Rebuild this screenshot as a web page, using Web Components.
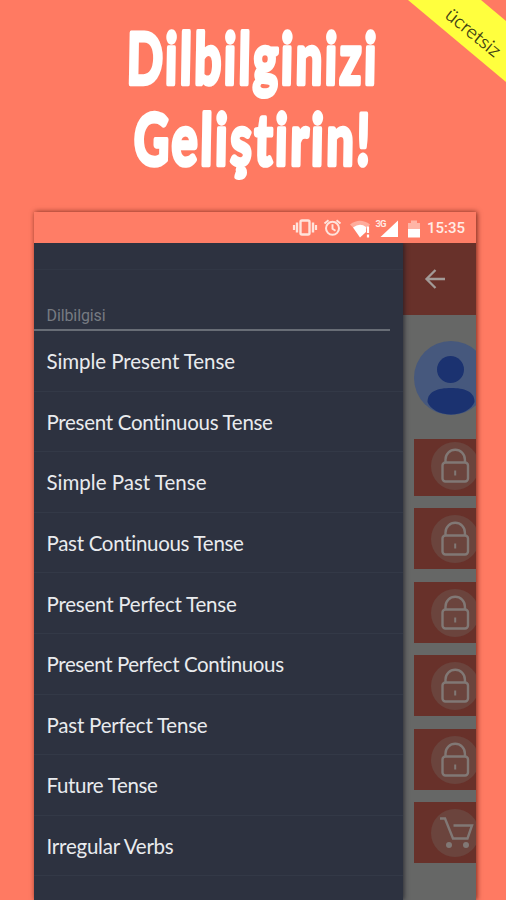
<!DOCTYPE html>
<html lang="tr">
<head>
<meta charset="UTF-8">
<title>Dilbilgisi</title>
<style>
    body {
        margin: 0;
        background: #ff7a62;
        font-family: Lato, "Open Sans", sans-serif;
    }
</style>
</head>
<body>
<promo-page>
    <promo-title slot="title"></promo-title>
    <corner-ribbon slot="ribbon"></corner-ribbon>
    <phone-frame>
        <status-bar slot="status">15:35</status-bar>
        <nav-drawer slot="drawer" heading="Dilbilgisi">
            <drawer-item width="188.5">Simple Present Tense</drawer-item>
            <drawer-item width="226.5">Present Continuous Tense</drawer-item>
            <drawer-item width="160">Simple Past Tense</drawer-item>
            <drawer-item width="197.5">Past Continuous Tense</drawer-item>
            <drawer-item width="190">Present Perfect Tense</drawer-item>
            <drawer-item width="237.5">Present Perfect Continuous</drawer-item>
            <drawer-item width="161">Past Perfect Tense</drawer-item>
            <drawer-item width="111">Future Tense</drawer-item>
            <drawer-item width="127">Irregular Verbs</drawer-item>
        </nav-drawer>
        <dimmed-page slot="page">
            <lesson-tile class="first"></lesson-tile>
            <lesson-tile></lesson-tile>
            <lesson-tile></lesson-tile>
            <lesson-tile></lesson-tile>
            <lesson-tile></lesson-tile>
            <lesson-tile icon="cart"></lesson-tile>
        </dimmed-page>
    </phone-frame>
</promo-page>

<script>
function define(name, render) {
    customElements.define(name, class extends HTMLElement {
        constructor() {
            super();
            this.attachShadow({ mode: 'open' });
        }

        connectedCallback() {
            this.shadowRoot.innerHTML = render(this);
        }
    });
}

// Page shell
define('promo-page', () => `
    <style>
        :host {
            display: flex;
            flex-direction: column;
            position: relative;
            width: 506px;
            height: 900px;
            overflow: hidden;
            background: #ff7a62;
        }
        ::slotted(corner-ribbon) {
            position: absolute;
            top: 0;
            right: 0;
        }
    </style>
    <slot name="title"></slot>
    <slot name="ribbon"></slot>
    <slot></slot>
`);

// Two line heading, condensed to a fixed width and rounded with a stroke
class PromoTitle extends HTMLElement {
    constructor() {
        super();
        this.attachShadow({ mode: 'open' });
    }

    connectedCallback() {
        this.shadowRoot.innerHTML = `
            <style>
                :host { display: block; height: 212px; }
                svg { display: block; }
                text {
                    font: 700 71px Lato, sans-serif;
                    font-variant-ligatures: none;
                    letter-spacing: 4px;
                    fill: #fff;
                    stroke: #fff;
                    stroke-width: 4.5px;
                    stroke-linejoin: round;
                }
            </style>
            <svg width="506" height="212">
                <text data-x="126.5" data-y="84" data-width="252">Dilbilginizi</text>
                <text data-x="133.5" data-y="165" data-width="239">Geliştirin!</text>
            </svg>
        `;
        this.shadowRoot.querySelectorAll('text').forEach(line => {
            const { x, y, width } = line.dataset;
            const scale = width / line.getComputedTextLength();
            line.setAttribute('transform', `translate(${x} ${y}) skewX(-1) scale(${scale} 1)`);
        });
    }
}
customElements.define('promo-title', PromoTitle);

define('corner-ribbon', () => `
    <style>
        :host { display: block; }
        svg { display: block; }
        text { font: 300 18.5px Lato, sans-serif; fill: #2c2c10; stroke: #2c2c10; stroke-width: .25px; }
    </style>
    <svg width="98" height="82">
        <path d="M0 0H73L98 21V82Z" fill="#ffff3e"/>
        <text transform="translate(36 17) rotate(39)" textLength="65" lengthAdjust="spacingAndGlyphs">ücretsiz</text>
    </svg>
`);

define('phone-frame', () => `
    <style>
        :host {
            display: flex;
            flex-direction: column;
            flex: 1;
            margin: 0 30.5px 0 34px;
            box-shadow: 1px 0 5px rgba(70, 15, 5, .75);
            overflow: hidden;
        }
        .screen { display: flex; flex: 1; }
    </style>
    <slot name="status"></slot>
    <div class="screen">
        <slot name="drawer"></slot>
        <slot name="page"></slot>
    </div>
`);

define('status-bar', () => `
    <style>
        :host {
            display: flex;
            align-items: center;
            justify-content: flex-end;
            box-sizing: border-box;
            height: 31px;
            padding-right: 9.5px;
            background: #ff7d66;
            color: #ffece6;
            font: 500 15px Roboto, sans-serif;
        }
        svg { display: block; }
        span { width: 39px; }
        text { font: 700 9.5px Roboto, sans-serif; }
    </style>
    <svg width="136" height="31" fill="none" stroke="#ffe3dc">
        <rect x="9.500" y="8.500" width="9" height="14" rx="1.500" stroke-width="2.400"/>
        <path d="M6 10.500v10M22 10.500v10" stroke-width="2.400"/>
        <path d="M3 13v5M25 13v5" stroke-width="2.200"/>
        <circle cx="41.500" cy="16.300" r="6.500" stroke-width="2"/>
        <path d="M41.500 12.300v4.500l3 2M33.500 11.500l4-3.300M49.500 11.500l-4-3.300" stroke-width="1.900"/>
        <path d="M59 12.500Q69 5 79 12.500L76 16.500H63Z" fill="#ffac9c" stroke="none"/>
        <path d="M62 15.500Q69 10.500 75 15V20L69 25.500Z" fill="#fff" stroke="none"/>
        <path d="M77 14.500v6.500M77 22.500v3" stroke="#fff" stroke-width="2.200"/>
        <path d="M107 8.500V25H89.500Z" fill="#fff" stroke="none"/>
        <text x="84.500" y="15" fill="#ffece6" stroke="#ff7d66" stroke-width="1" paint-order="stroke" textLength="11">3G</text>
        <path d="M117 11h3V8.500h6V11h3v6h-12z" fill="#ffb5a6" stroke="none"/>
        <path d="M117 17h12v8.500h-12z" fill="#fff" stroke="none"/>
    </svg>
    <span><slot></slot></span>
`);

define('nav-drawer', el => `
    <style>
        :host {
            display: block;
            width: 369px;
            background: #2d3240;
            box-shadow: 1px 0 5px rgba(20, 22, 32, .75);
            clip-path: inset(0 -8px 0 0);
            z-index: 1;
        }
        .blank {
            height: 26px;
            border-bottom: 1px solid #313745;
        }
        .heading {
            display: flex;
            align-items: flex-end;
            box-sizing: border-box;
            height: 61px;
            width: 356px;
            padding: 0 12.5px 4px;
            border-bottom: 2px solid #686d76;
            color: #777b82;
            font: 400 16px/18px Roboto, sans-serif;
            letter-spacing: -.1px;
        }
    </style>
    <div class="blank"></div>
    <div class="heading">${el.getAttribute('heading')}</div>
    <slot></slot>
`);

// Drawer row. The letter spacing is tuned so that the label fills its width
class DrawerItem extends HTMLElement {
    constructor() {
        super();
        this.attachShadow({ mode: 'open' });
    }

    connectedCallback() {
        this.shadowRoot.innerHTML = `
            <style>
                :host {
                    display: flex;
                    align-items: center;
                    box-sizing: border-box;
                    height: 60.6px;
                    padding: 1px 0 0 12.5px;
                    border-bottom: 1px solid #333947;
                    color: #e9ebee;
                    font: 400 20.5px/24px Lato, sans-serif;
                    white-space: nowrap;
                }
            </style>
            <span><slot></slot></span>
        `;
        const label = this.shadowRoot.querySelector('span');
        const extra = Number(this.getAttribute('width')) - label.getBoundingClientRect().width;
        label.style.letterSpacing = `${extra / this.textContent.length}px`;
    }
}
customElements.define('drawer-item', DrawerItem);

define('dimmed-page', () => `
    <style>
        :host {
            display: flex;
            flex-direction: column;
            flex: 1;
            min-width: 0;
            overflow: hidden;
            background: #666766;
        }
        header {
            height: 72px;
            background: #68312a;
        }
        svg { display: block; }
        .avatar { height: 123.500px; }
        .tiles {
            display: flex;
            flex-direction: column;
            gap: 12.400px;
            padding-left: 11px;
        }
    </style>
    <header>
        <svg width="72" height="72" fill="none" stroke="#a29a97" stroke-width="2.300">
            <path d="M42 36H24M32.500 27L23.500 36l9 9"/>
        </svg>
    </header>
    <div class="avatar">
        <svg width="72.500" height="123">
            <circle cx="48" cy="63" r="37" fill="#46587d"/>
            <circle cx="47.500" cy="54.500" r="13.500" fill="#1b3270"/>
            <path d="M24.500 87C24.500 76 35 73 48 73S71.500 76 71.500 87C69 94 59 99.500 48 99.500S27 94 24.500 87Z" fill="#1b3270"/>
        </svg>
    </div>
    <div class="tiles"><slot></slot></div>
`);

const tileIcons = {
    lock: `
        <rect x="28.500" y="27.500" width="25.500" height="19" rx="3"/>
        <path d="M31.500 27.500v-3a9.700 9.700 0 0 1 19.400 0v3"/>
        <path d="M41.200 35.500v5" stroke-width="2"/>`,
    cart: `
        <path d="M26 16.500h5L39 36.500H53.500L58 23.500H39.500"/>
        <g fill="#817875" stroke="none">
            <circle cx="35" cy="43" r="3"/>
            <circle cx="52" cy="43" r="3"/>
        </g>`
};

define('lesson-tile', el => `
    <style>
        :host {
            display: flex;
            align-items: flex-end;
            height: 61px;
            overflow: hidden;
            background: #68312a;
        }
        :host(.first) { height: 57.500px; }
        svg { display: block; flex: none; }
    </style>
    <svg width="66" height="61" fill="none" stroke="#817875" stroke-width="2.400">
        <circle cx="41" cy="31" r="24" fill="#6b443d" stroke="none"/>
        ${tileIcons[el.getAttribute('icon') || 'lock']}
    </svg>
`);
</script>
</body>
</html>
